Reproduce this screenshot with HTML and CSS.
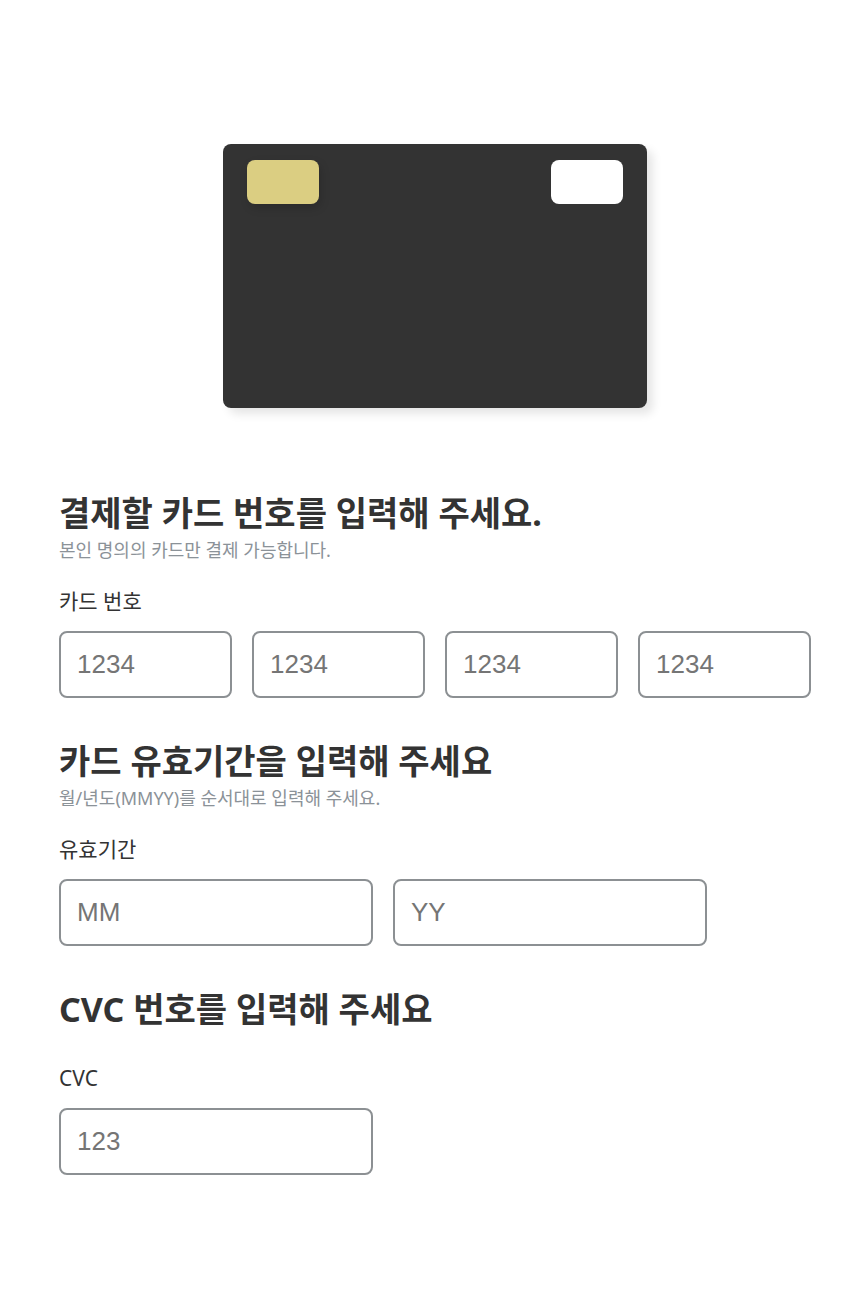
FILE: index.html
```html
<!DOCTYPE html>
<html lang="ko">
<head>
<meta charset="utf-8">
<meta name="viewport" content="width=device-width, initial-scale=1">
<title>카드 등록</title>
<link rel="stylesheet" href="styles.css">
</head>
<body>
<main class="page">
  <div class="card">
    <span class="card-chip"></span>
    <span class="card-brand"></span>
  </div>
  <form class="form">
    <section class="section">
      <h1 class="title">결제할 카드 번호를 입력해 주세요.</h1>
      <p class="caption">본인 명의의 카드만 결제 가능합니다.</p>
      <label class="label" for="number-1">카드 번호</label>
      <div class="fields">
        <input class="input" id="number-1" type="text" inputmode="numeric" maxlength="4" placeholder="1234">
        <input class="input" aria-label="카드 번호 2" type="text" inputmode="numeric" maxlength="4" placeholder="1234">
        <input class="input" aria-label="카드 번호 3" type="text" inputmode="numeric" maxlength="4" placeholder="1234">
        <input class="input" aria-label="카드 번호 4" type="text" inputmode="numeric" maxlength="4" placeholder="1234">
      </div>
    </section>
    <section class="section">
      <h2 class="title">카드 유효기간을 입력해 주세요</h2>
      <p class="caption">월/년도(MMYY)를 순서대로 입력해 주세요.</p>
      <label class="label" for="month">유효기간</label>
      <div class="fields">
        <input class="input input-wide" id="month" type="text" inputmode="numeric" maxlength="2" placeholder="MM">
        <input class="input input-wide" aria-label="유효기간 연도" type="text" inputmode="numeric" maxlength="2" placeholder="YY">
      </div>
    </section>
    <section class="section">
      <h2 class="title">CVC 번호를 입력해 주세요</h2>
      <label class="label label-spaced" for="cvc">CVC</label>
      <div class="fields">
        <input class="input input-wide" id="cvc" type="text" inputmode="numeric" maxlength="3" placeholder="123">
      </div>
    </section>
  </form>
</main>
</body>
</html>
```
FILE: styles.css
```css
* {
  box-sizing: border-box;
}

body {
  margin: 0;
  background: #fff;
  color: #333;
  font-family: "Noto Sans", "Noto Sans CJK KR", sans-serif;
}

.page {
  padding: 144px 51px 128px 59px;
}

.card {
  display: flex;
  justify-content: space-between;
  width: 424px;
  max-width: 100%;
  height: 264px;
  margin: 0 auto 80px;
  padding: 16px 24px;
  border-radius: 8px;
  background: #333;
  box-shadow: 6px 6px 10px rgba(0, 0, 0, 0.1);
}

.card-chip,
.card-brand {
  width: 72px;
  height: 44px;
  border-radius: 8px;
}

.card-chip {
  background: #dbce82;
  box-shadow: 2px 4px 10px rgba(0, 0, 0, 0.16);
}

.card-brand {
  background: #fff;
}

.form {
  display: flex;
  flex-direction: column;
  gap: 38px;
}

.section {
  display: flex;
  flex-direction: column;
}

.title {
  margin: 0;
  font-size: 34px;
  line-height: 50px;
  font-weight: 700;
}

.caption {
  margin: 0 0 25px;
  color: #8b9298;
  font-size: 18px;
  line-height: 24px;
}

.label {
  margin-bottom: 16px;
  font-size: 21px;
  line-height: 28px;
}

.label-spaced {
  margin-top: 30px;
}

.fields {
  display: flex;
  gap: 20px;
}

.input {
  flex: 1;
  min-width: 0;
  height: 67px;
  padding: 0 16px;
  border: 2px solid #8c9093;
  border-radius: 8px;
  background: #fff;
  color: #333;
  font-family: "Liberation Sans", "Noto Sans CJK KR", sans-serif;
  font-size: 26px;
}

.input-wide {
  flex: 0 1 314px;
}

.input::placeholder {
  color: #757575;
}
```
